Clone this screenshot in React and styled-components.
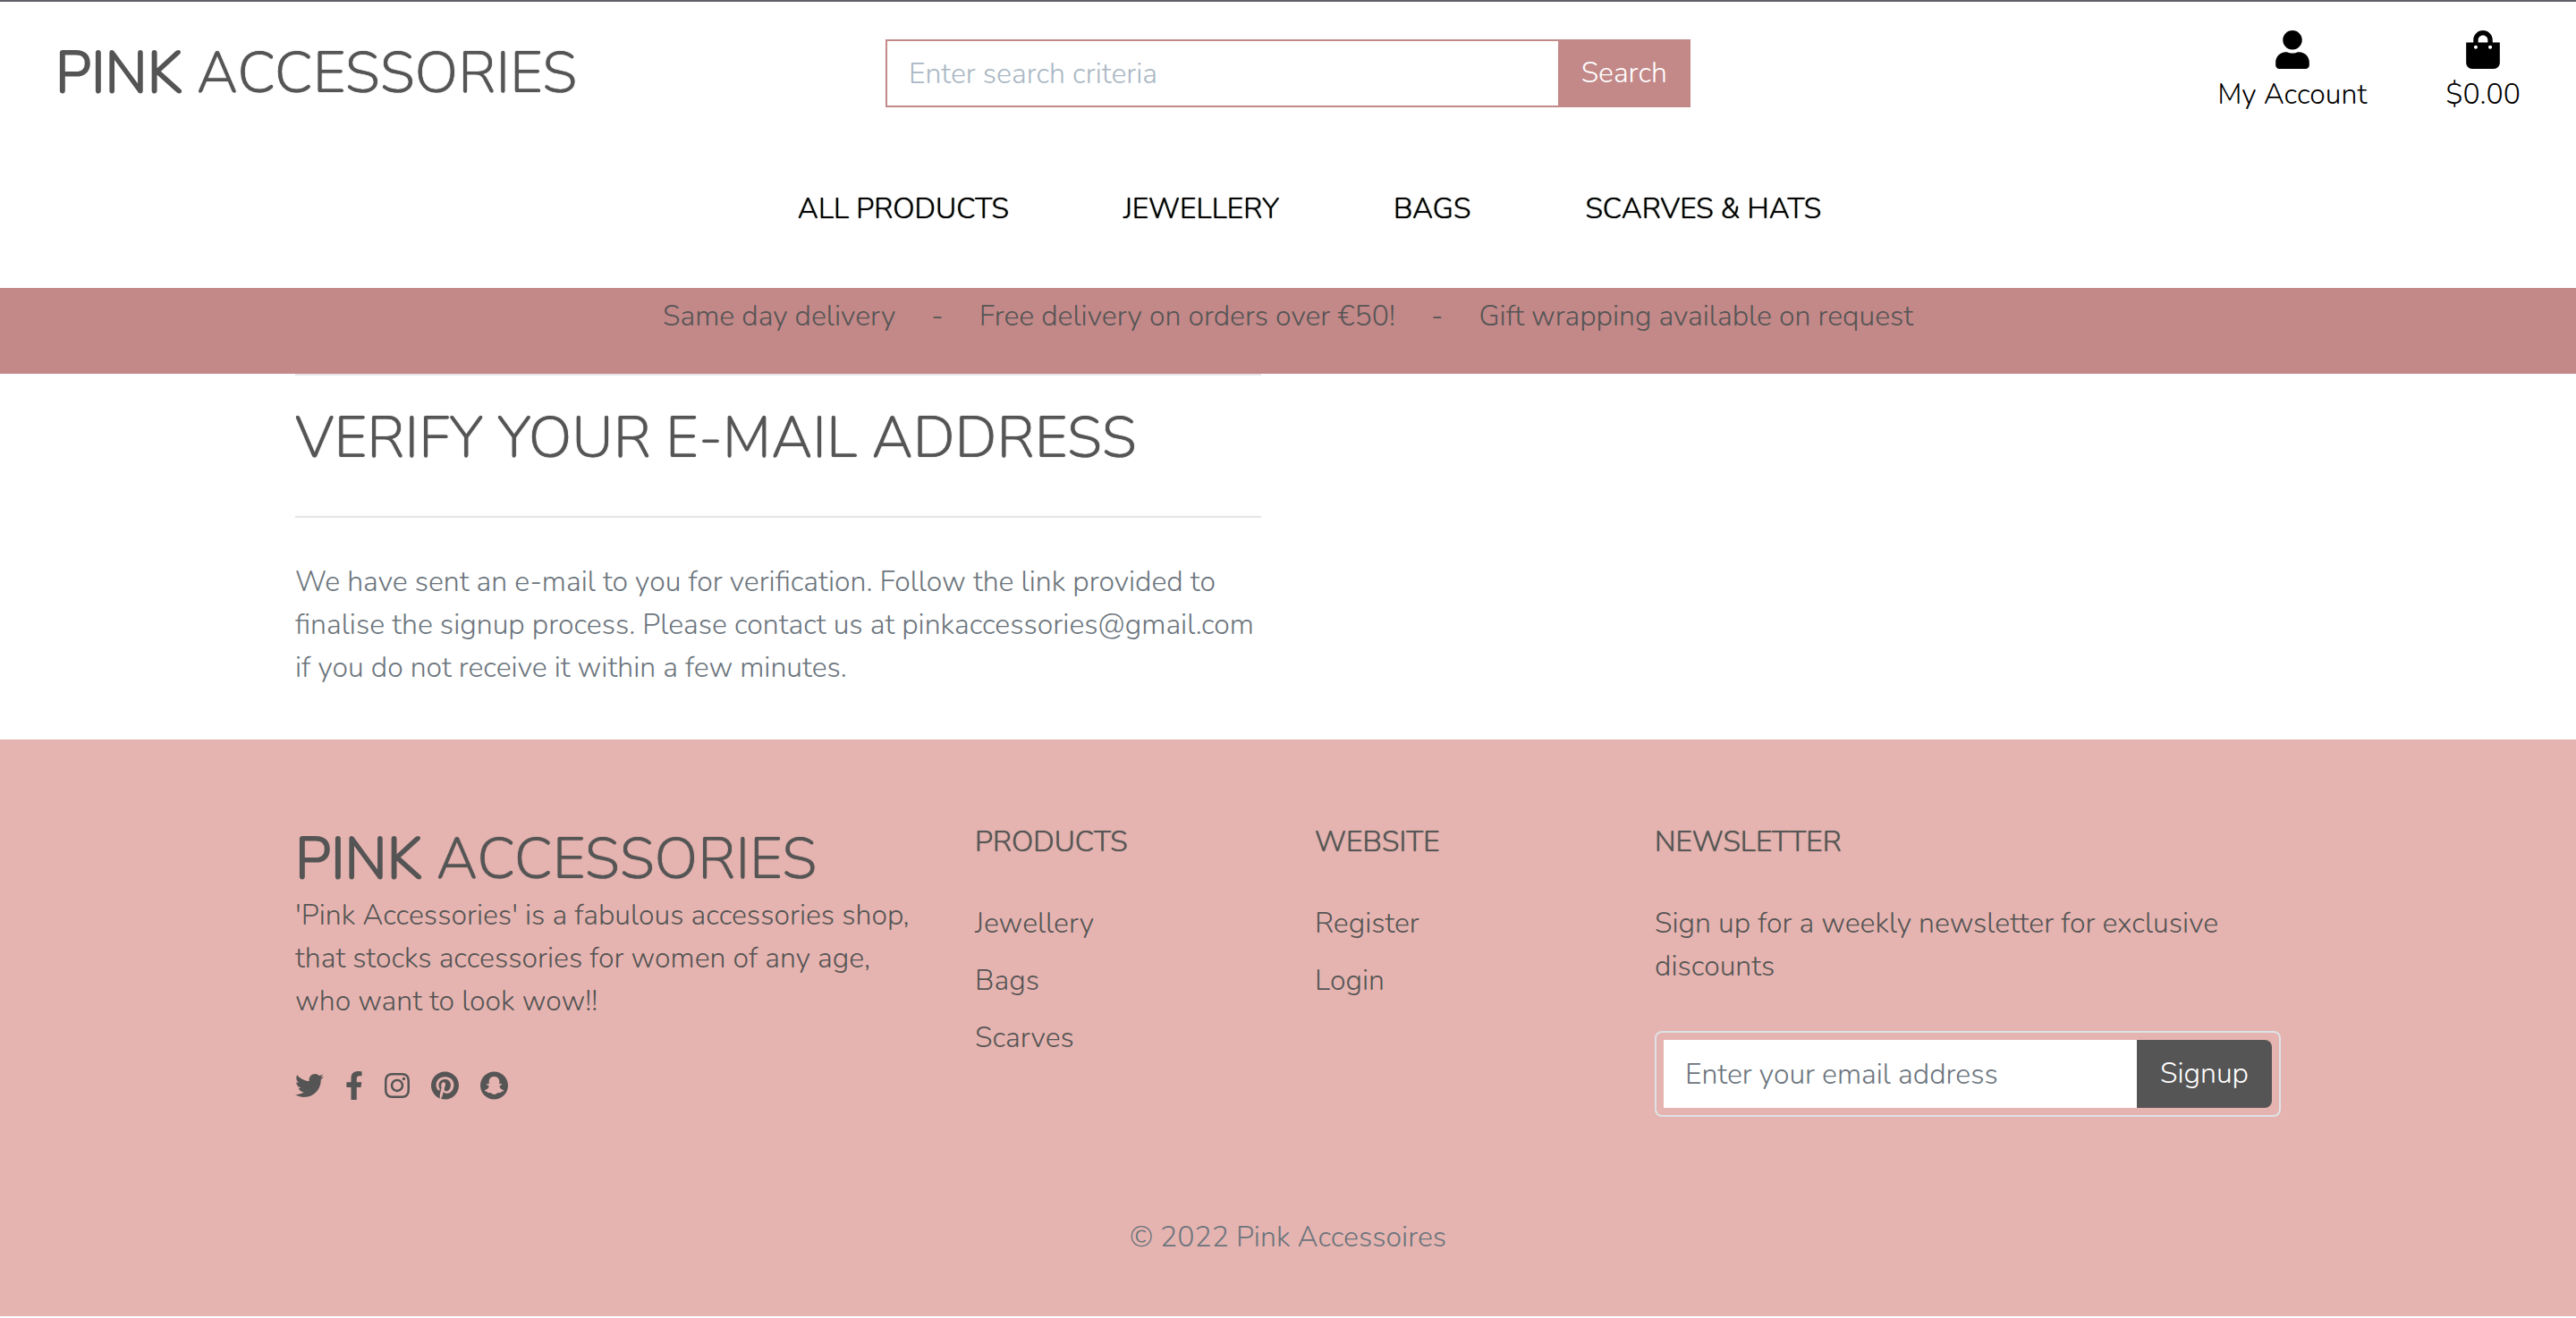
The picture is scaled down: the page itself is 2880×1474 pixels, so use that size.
import React from 'react';
import styled, { createGlobalStyle } from 'styled-components';
import {
  FaUser,
  FaShoppingBag,
  FaTwitter,
  FaFacebookF,
  FaInstagram,
  FaPinterest,
  FaSnapchat,
} from 'react-icons/fa';

const color = {
  rose: '#c38888',
  blush: '#e6b4b0',
  ink: '#555555',
  muted: '#6c757d',
};

const GlobalStyle = createGlobalStyle`
  *, *::before, *::after { box-sizing: border-box; }
  body {
    margin: 0;
    background: #ffffff;
    color: ${color.ink};
    font-family: Nunito, Lato, "Open Sans", sans-serif;
    font-size: 32px;
    font-weight: 300;
    line-height: 48px;
  }
  a { color: inherit; text-decoration: none; }
  h1, h2, p, ul, form { margin: 0; padding: 0; }
  ul { list-style: none; }
  input, button { font: inherit; }
`;

const Header = styled.header`
  border-top: 2px solid #625f66;
  padding: 32px 0 64px;
`;

const TopBar = styled.div`
  display: grid;
  grid-template-columns: repeat(3, 1fr);
  align-items: center;
`;

const LogoCell = styled.div`
  padding-left: 62px;
`;

const Logo = styled.a`
  display: block;
  font-size: 64px;
  line-height: 77px;
  white-space: nowrap;
  color: ${color.ink};
  text-shadow: 0 0 1px currentColor;

  strong {
    font-weight: 300;
    -webkit-text-stroke: 2px currentColor;
    text-shadow: none;
  }
`;

const SearchForm = styled.form`
  display: flex;
  margin: 0 30px;
`;

const TextField = styled.input`
  flex: 1;
  min-width: 0;
  height: 76px;
  padding: 0 24px;
  border: 0;
  border-radius: 0;
  background: #ffffff;
  color: ${color.ink};
  outline: none;

  &::placeholder { color: ${color.muted}; opacity: 1; }
`;

const SearchField = styled(TextField)`
  border: 2px solid ${color.rose};
  border-right: 0;

  &::placeholder { color: #aab7c4; }
`;

const Button = styled.button`
  height: 76px;
  padding: 0 26px;
  border: 0;
  border-radius: ${(p) => (p.$rounded ? '0 8px 8px 0' : '0')};
  background: ${(p) => p.$fill};
  color: #ffffff;
  cursor: pointer;
`;

const UserLinks = styled.ul`
  display: flex;
  justify-content: flex-end;
  gap: 88px;
  padding-right: 62px;
`;

const UserLink = styled.a`
  display: flex;
  flex-direction: column;
  align-items: center;
  gap: 5px;
  color: #000000;

  svg { width: 38px; height: 43px; }
`;

const MainNav = styled.nav`
  margin-top: 80px;

  ul {
    display: flex;
    justify-content: center;
    padding-left: 48px;
  }

  a {
    display: block;
    padding: 0 64px;
    color: #000000;
    text-shadow: 0 0 1px currentColor;
  }
`;

const Banner = styled.div`
  display: flex;
  justify-content: center;
  gap: 40px;
  padding: 8px 0 40px;
  background: ${color.rose};
`;

const Container = styled.div`
  width: 100%;
  max-width: 2280px;
  margin: 0 auto;
`;

const Message = styled.main`
  width: 50%;
  padding: 0 30px 56px;
  color: ${color.muted};
`;

const Rule = styled.hr`
  margin: 0;
  border: 0;
  border-top: 2px solid rgba(0, 0, 0, 0.1);
`;

const PageTitle = styled.h1`
  margin: 32px 0 48px;
  color: ${color.ink};
  font-size: 64px;
  font-weight: 300;
  line-height: 77px;
  text-shadow: 0 0 1px currentColor;
`;

const MessageText = styled.p`
  margin-top: 48px;
`;

const Footer = styled.footer`
  background: ${color.blush};
`;

const FooterGrid = styled(Container)`
  display: grid;
  grid-template-columns: 2fr 1fr 1fr 2fr;
  padding: 96px 0;
`;

const FooterColumn = styled.section`
  min-width: 0;
  padding: 0 30px;
`;

const ColumnTitle = styled.h2`
  margin-bottom: 48px;
  font-size: 32px;
  font-weight: 300;
  line-height: 38px;
  text-shadow: 0 0 1px currentColor;
`;

const LinkList = styled.ul`
  display: grid;
  gap: 16px;
`;

const SocialList = styled.ul`
  display: flex;
  gap: 24px;
  margin-top: 54px;
`;

const SocialLink = styled.a`
  display: flex;

  svg { width: ${(p) => p.$width}px; height: 32px; }
`;

const SignupForm = styled.form`
  display: flex;
  margin-top: 48px;
  padding: 8px;
  border: 2px solid #dee2e6;
  border-radius: 8px;
`;

const Copyright = styled.p`
  padding: 15px 0 64px;
  color: ${color.muted};
  text-align: center;
`;

const NAV = ['ALL PRODUCTS', 'JEWELLERY', 'BAGS', 'SCARVES & HATS'];
const OFFERS = ['Same day delivery', 'Free delivery on orders over €50!', 'Gift wrapping available on request'];
const SOCIAL = [
  ['Twitter', FaTwitter, 32],
  ['Facebook', FaFacebookF, 20],
  ['Instagram', FaInstagram, 28],
  ['Pinterest', FaPinterest, 31],
  ['Snapchat', FaSnapchat, 31],
];

const Brand = () => (
  <Logo href="#"><strong>PINK</strong> ACCESSORIES</Logo>
);

const Links = ({ items }) => (
  <LinkList>
    {items.map((item) => (
      <li key={item}><a href="#">{item}</a></li>
    ))}
  </LinkList>
);

export default function App() {
  return (
    <>
      <GlobalStyle />
      <Header>
        <TopBar>
          <LogoCell><Brand /></LogoCell>
          <SearchForm onSubmit={(e) => e.preventDefault()}>
            <SearchField type="text" aria-label="Search" placeholder="Enter search criteria" />
            <Button type="submit" $fill={color.rose}>Search</Button>
          </SearchForm>
          <UserLinks>
            <li><UserLink href="#"><FaUser aria-hidden="true" />My Account</UserLink></li>
            <li><UserLink href="#"><FaShoppingBag aria-hidden="true" />$0.00</UserLink></li>
          </UserLinks>
        </TopBar>
        <MainNav>
          <ul>
            {NAV.map((item) => (
              <li key={item}><a href="#">{item}</a></li>
            ))}
          </ul>
        </MainNav>
      </Header>

      <Banner>
        {OFFERS.map((offer, i) => (
          <React.Fragment key={offer}>
            {i > 0 && <span>-</span>}
            <span>{offer}</span>
          </React.Fragment>
        ))}
      </Banner>

      <Container>
        <Message>
          <Rule />
          <PageTitle>VERIFY YOUR E-MAIL ADDRESS</PageTitle>
          <Rule />
          <MessageText>
            We have sent an e-mail to you for verification. Follow the link provided to
            finalise the signup process. Please contact us at pinkaccessories@gmail.com if
            you do not receive it within a few minutes.
          </MessageText>
        </Message>
      </Container>

      <Footer>
        <FooterGrid>
          <FooterColumn>
            <Brand />
            <p>
              'Pink Accessories' is a fabulous accessories shop, that stocks accessories for
              women of any age, who want to look wow!!
            </p>
            <SocialList>
              {SOCIAL.map(([name, Icon, width]) => (
                <li key={name}>
                  <SocialLink href="#" aria-label={name} $width={width}><Icon /></SocialLink>
                </li>
              ))}
            </SocialList>
          </FooterColumn>
          <FooterColumn>
            <ColumnTitle>PRODUCTS</ColumnTitle>
            <Links items={['Jewellery', 'Bags', 'Scarves']} />
          </FooterColumn>
          <FooterColumn>
            <ColumnTitle>WEBSITE</ColumnTitle>
            <Links items={['Register', 'Login']} />
          </FooterColumn>
          <FooterColumn>
            <ColumnTitle>NEWSLETTER</ColumnTitle>
            <p>Sign up for a weekly newsletter for exclusive discounts</p>
            <SignupForm onSubmit={(e) => e.preventDefault()}>
              <TextField type="email" aria-label="Email address" placeholder="Enter your email address" />
              <Button type="submit" $fill={color.ink} $rounded>Signup</Button>
            </SignupForm>
          </FooterColumn>
        </FooterGrid>
        <Copyright>© 2022 Pink Accessoires</Copyright>
      </Footer>
    </>
  );
}
